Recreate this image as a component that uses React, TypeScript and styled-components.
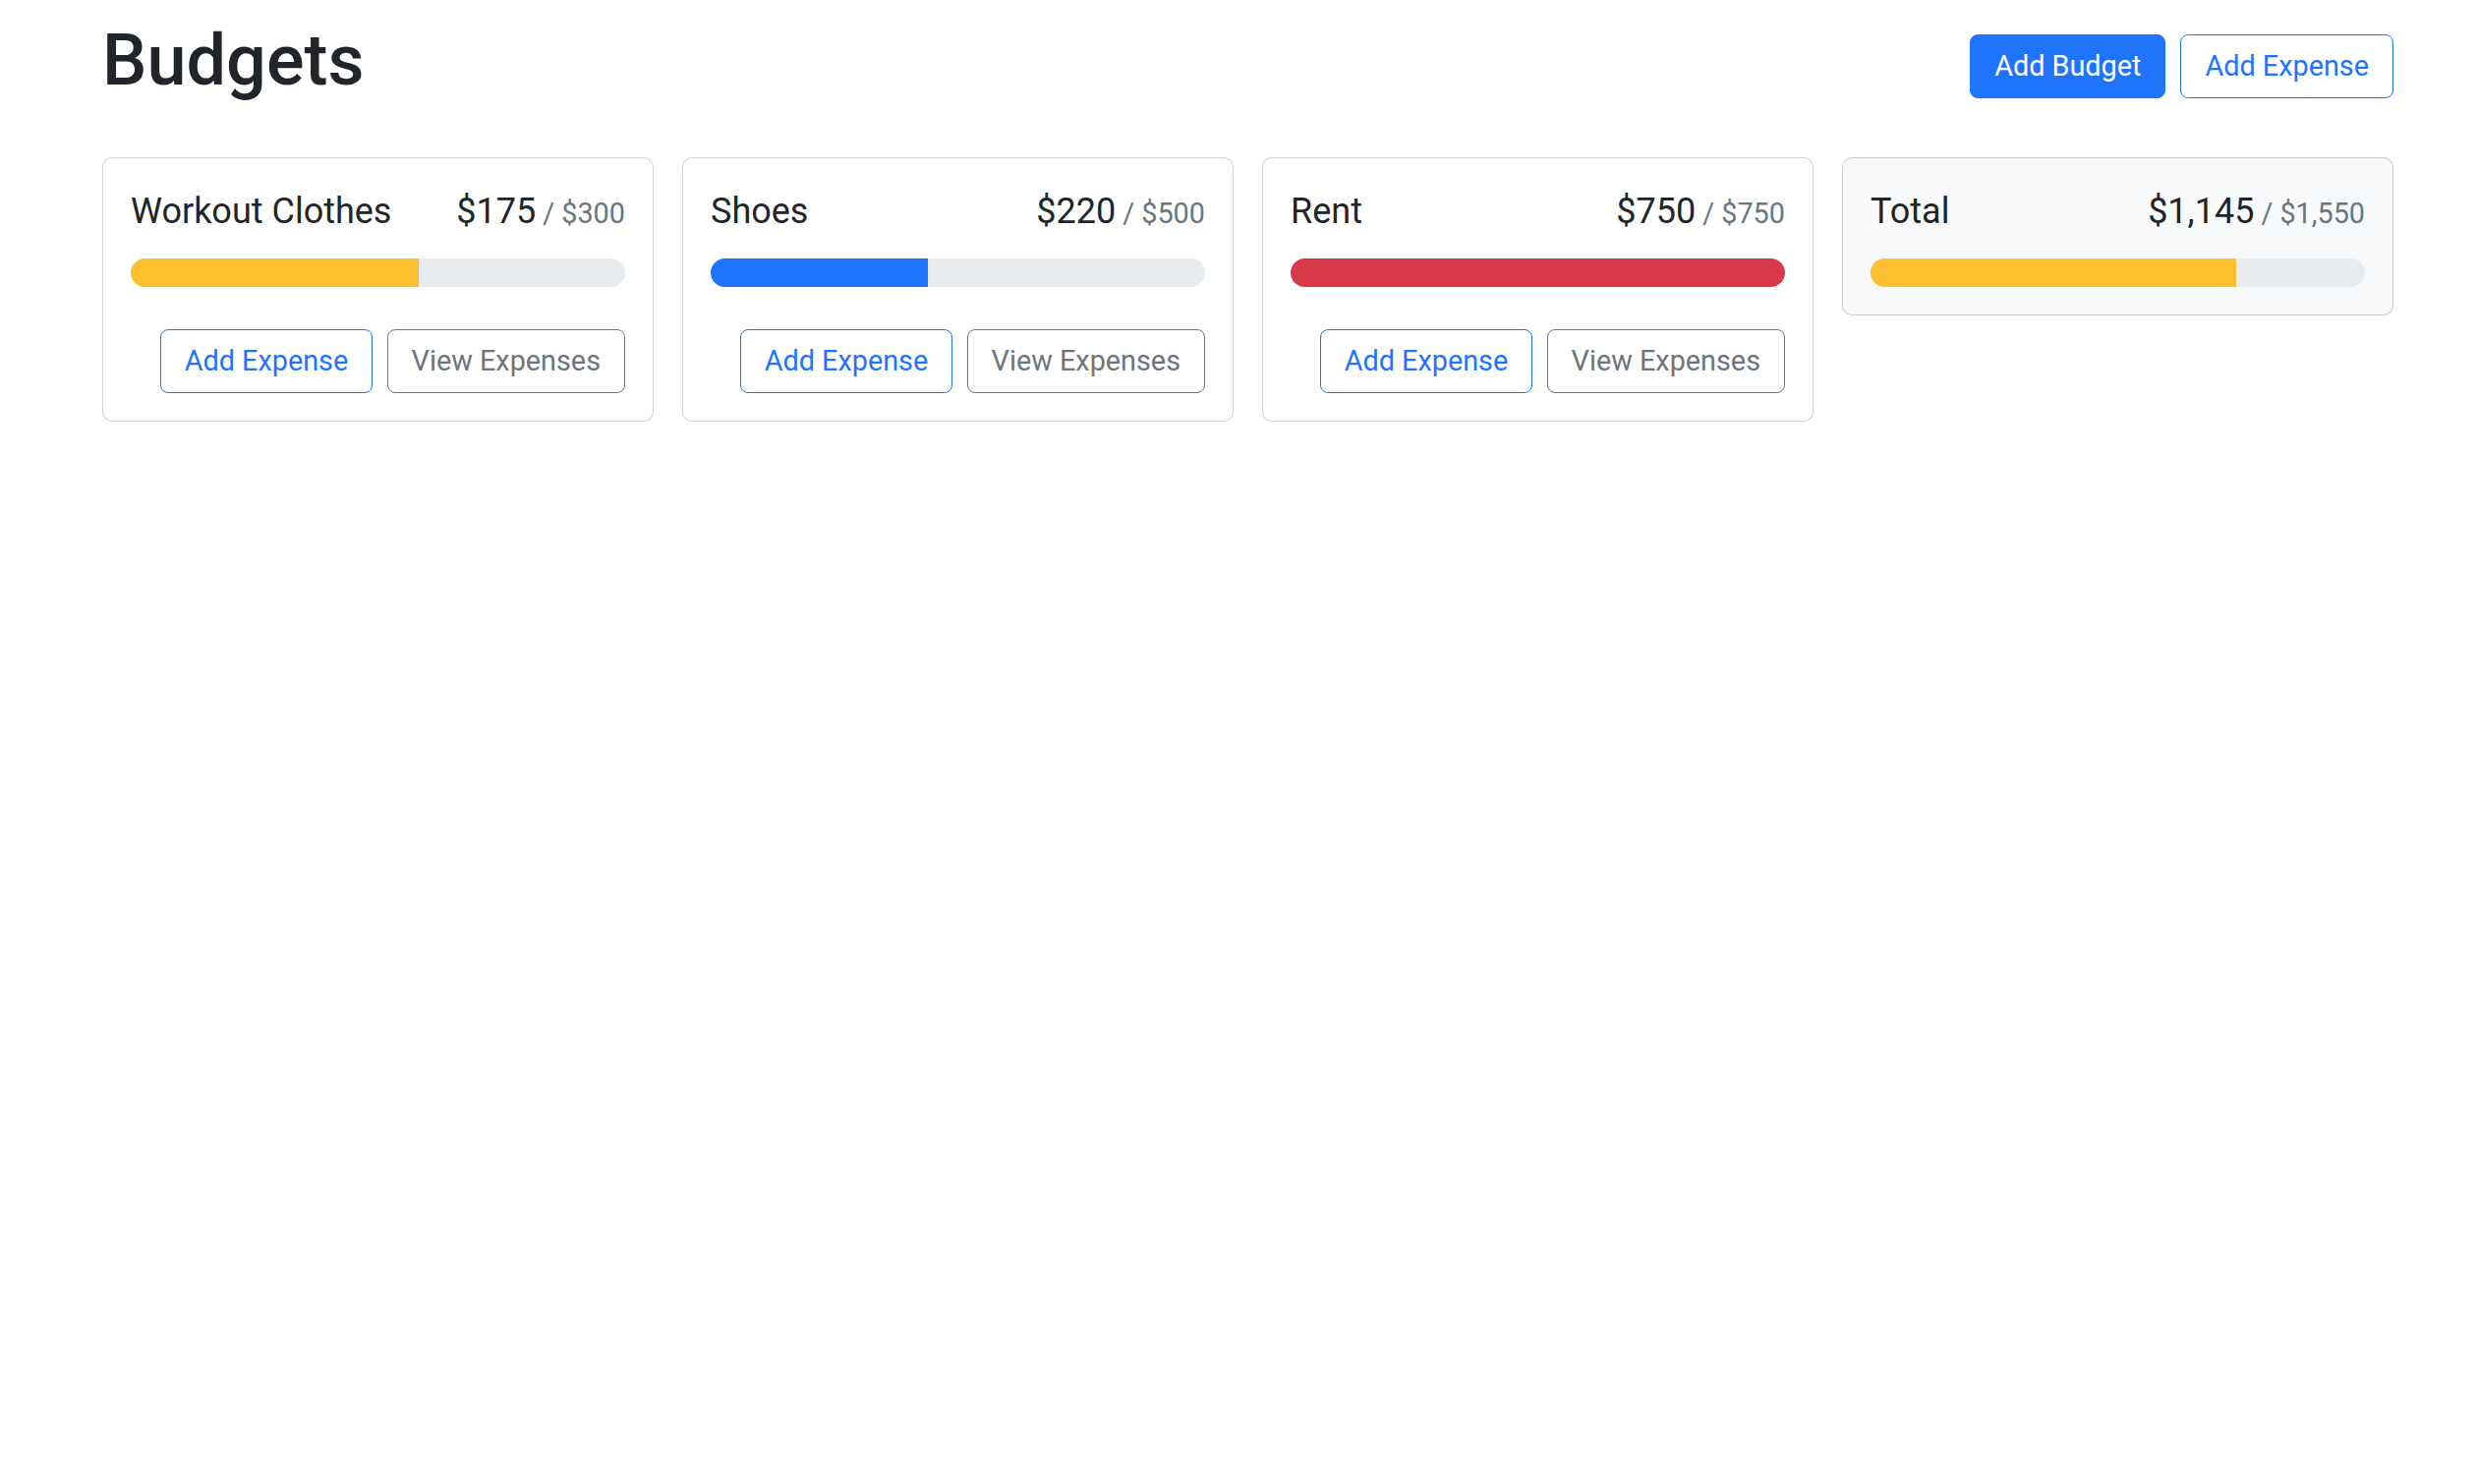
import React from 'react';
import styled, { createGlobalStyle, css } from 'styled-components';

const GlobalStyle = createGlobalStyle`
  html, body { margin: 0; padding: 0; background: #ffffff; }
  body {
    font-family: Roboto, "Liberation Sans", Arial, sans-serif;
    color: #212529;
    -webkit-font-smoothing: antialiased;
  }
  *, *::before, *::after { box-sizing: border-box; }
`;

const colors = {
  primary: '#1e74fd',
  secondary: '#6c757d',
  warning: '#fcbf30',
  danger: '#d83948',
  track: '#e9ecef',
  light: '#f8f9fa',
  text: '#212529',
  muted: '#6c757d',
};

const Container = styled.div`
  width: 2331px;
  margin-left: 104px;
  padding-top: 17px;
`;

const Header = styled.div`
  display: flex;
  align-items: center;
  gap: 15px;
  margin-bottom: 43px;
`;

const PageTitle = styled.h1`
  margin: 0 auto 12px 0;
  padding-top: 2px;
  font-size: 72px;
  line-height: 86px;
  font-weight: 500;
  color: ${colors.text};
`;

type Variant = 'primary' | 'outline-primary' | 'outline-secondary';

const Button = styled.button<{ $variant: Variant }>`
  font-family: inherit;
  font-size: 28.8px;
  line-height: 43px;
  font-weight: 400;
  padding: 10px 24px;
  border: 1.5px solid transparent;
  border-radius: 8px;
  background: transparent;
  cursor: pointer;
  white-space: nowrap;
  ${(p) =>
    p.$variant === 'primary' &&
    css`
      background: ${colors.primary};
      border-color: ${colors.primary};
      color: #ffffff;
    `}
  ${(p) =>
    p.$variant === 'outline-primary' &&
    css`
      border-color: ${colors.primary};
      color: ${colors.primary};
    `}
  ${(p) =>
    p.$variant === 'outline-secondary' &&
    css`
      border-color: ${colors.secondary};
      color: ${colors.secondary};
    `}
`;

const Grid = styled.div`
  display: grid;
  grid-template-columns: repeat(4, 1fr);
  gap: 29px;
  align-items: start;
`;

const Card = styled.div<{ $light?: boolean }>`
  border: 1.5px solid rgba(0, 0, 0, 0.175);
  border-radius: 10px;
  background: ${(p) => (p.$light ? colors.light : '#ffffff')};
  padding: 28px;
`;

const CardTitle = styled.div`
  display: flex;
  justify-content: space-between;
  align-items: baseline;
  font-size: 36px;
  line-height: 43px;
  font-weight: 400;
  padding-top: 5px;
  margin-bottom: 24px;
`;

const Name = styled.div`
  margin-right: 14px;
`;

const Amount = styled.div`
  display: flex;
  align-items: baseline;
`;

const Max = styled.span`
  color: ${colors.muted};
  font-size: 28.8px;
  margin-left: 7px;
`;

const Progress = styled.div`
  display: flex;
  height: 28.5px;
  background: ${colors.track};
  border-radius: 999px;
  overflow: hidden;
`;

const ProgressFill = styled.div<{ $tone: 'primary' | 'warning' | 'danger' }>`
  height: 100%;
  background: ${(p) => colors[p.$tone]};
`;

const Actions = styled.div`
  display: flex;
  justify-content: flex-end;
  gap: 14.4px;
  margin-top: 43px;
`;

const fmt = new Intl.NumberFormat('en-US', {
  style: 'currency',
  currency: 'USD',
  minimumFractionDigits: 0,
  maximumFractionDigits: 0,
});

function tone(amount: number, max: number): 'primary' | 'warning' | 'danger' {
  const r = amount / max;
  if (r < 0.5) return 'primary';
  if (r < 0.75) return 'warning';
  return 'danger';
}

type BudgetProps = {
  name: string;
  amount: number;
  max: number;
  light?: boolean;
  hideButtons?: boolean;
};

function BudgetCard({ name, amount, max, light, hideButtons }: BudgetProps) {
  const pct = Math.min(100, (amount / max) * 100);
  return (
    <Card $light={light}>
      <CardTitle>
        <Name>{name}</Name>
        <Amount>
          {fmt.format(amount)}
          <Max>/ {fmt.format(max)}</Max>
        </Amount>
      </CardTitle>
      <Progress>
        <ProgressFill $tone={tone(amount, max)} style={{ width: `${pct}%` }} />
      </Progress>
      {!hideButtons && (
        <Actions>
          <Button $variant="outline-primary">Add Expense</Button>
          <Button $variant="outline-secondary">View Expenses</Button>
        </Actions>
      )}
    </Card>
  );
}

const budgets = [
  { name: 'Workout Clothes', amount: 175, max: 300 },
  { name: 'Shoes', amount: 220, max: 500 },
  { name: 'Rent', amount: 750, max: 750 },
];

export default function App() {
  const totalAmount = budgets.reduce((s, b) => s + b.amount, 0);
  const totalMax = budgets.reduce((s, b) => s + b.max, 0);
  return (
    <>
      <GlobalStyle />
      <Container>
        <Header>
          <PageTitle>Budgets</PageTitle>
          <Button $variant="primary">Add Budget</Button>
          <Button $variant="outline-primary">Add Expense</Button>
        </Header>
        <Grid>
          {budgets.map((b) => (
            <BudgetCard key={b.name} {...b} />
          ))}
          <BudgetCard name="Total" amount={totalAmount} max={totalMax} light hideButtons />
        </Grid>
      </Container>
    </>
  );
}
